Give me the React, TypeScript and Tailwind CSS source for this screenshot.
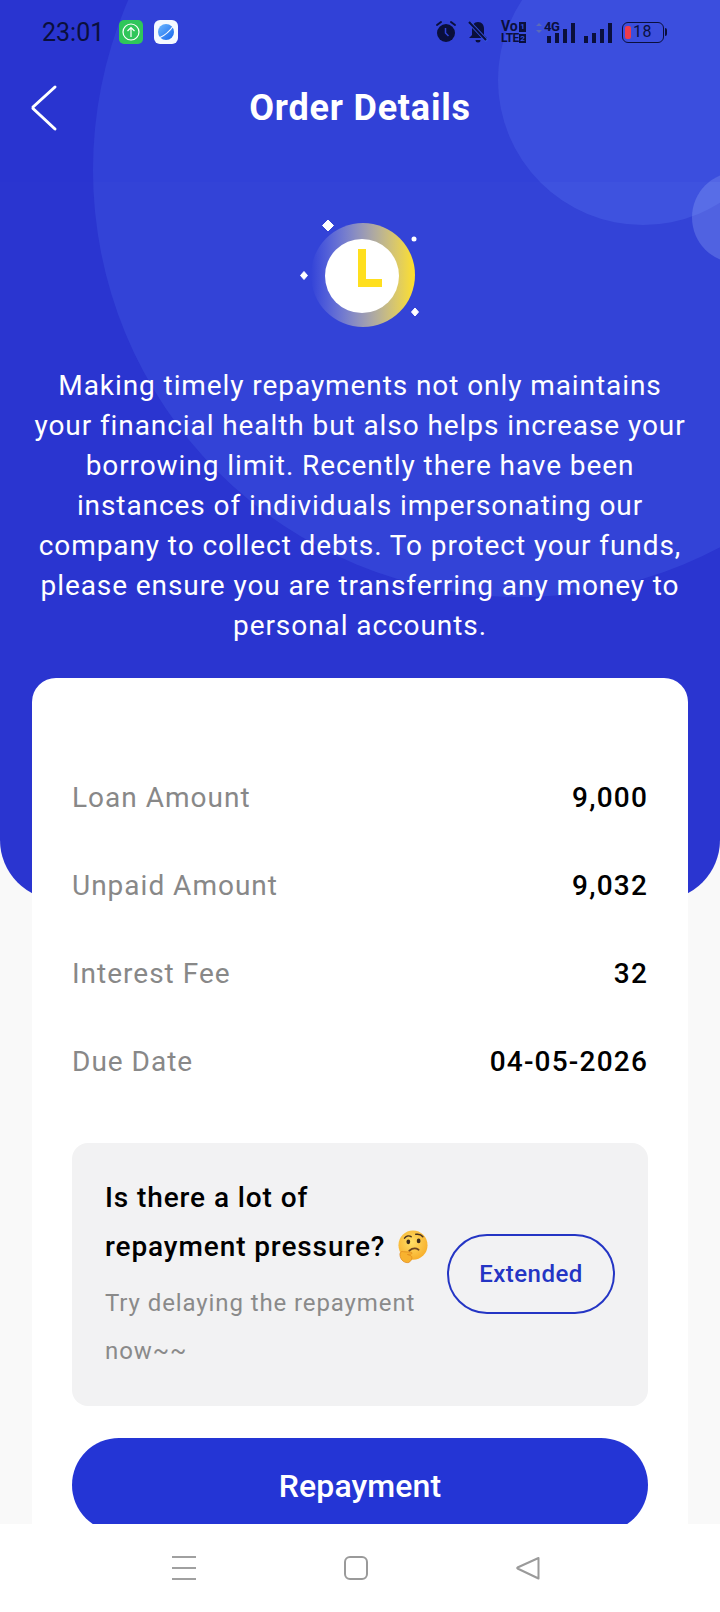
const rows = [
  { label: "Loan Amount", value: "9,000" },
  { label: "Unpaid Amount", value: "9,032" },
  { label: "Interest Fee", value: "32" },
  { label: "Due Date", value: "04-05-2026" },
];

function StatusIcons() {
  return (
    <div className="flex items-center">
      <svg width="22" height="24" viewBox="0 0 22 24">
        <circle cx="11" cy="13" r="9" fill="#0a0f3c" />
        <path d="M2 5l4-3M20 5l-4-3" stroke="#0a0f3c" strokeWidth="2" strokeLinecap="round" />
        <path d="M10.5 8v5l3 3" stroke="#3044d8" strokeWidth="1.5" fill="none" />
      </svg>
      <svg width="22" height="24" viewBox="0 0 22 24" className="ml-[10px]">
        <path d="M11 2c-4 0-6 3-6 7v6l-3 3h18l-3-3V9c0-4-2-7-6-7z" fill="#0a0f3c" />
        <path d="M8.5 20a2.5 2.5 0 0 0 5 0z" fill="#0a0f3c" />
        <path d="M3 3l17 18" stroke="#3350dd" strokeWidth="4" />
        <path d="M2 2l17 18" stroke="#0a0f3c" strokeWidth="2" />
      </svg>
      <div className="ml-[12px] flex w-[25px] flex-col text-[#0a0f3c]">
        <div className="flex items-center justify-between text-[14px] leading-[11px] font-bold">
          <span>Vo</span>
          <span className="h-[10px] w-[7px] bg-[#0a0f3c] text-center text-[8px] leading-[10px] text-[#3350dd]">1</span>
        </div>
        <div className="mt-[1px] flex items-center justify-between text-[12px] leading-[10px] font-bold">
          <span className="tracking-[-0.5px]">LTE</span>
          <span className="h-[9px] w-[7px] bg-[#0a0f3c] text-center text-[8px] leading-[9px] text-[#3350dd]">2</span>
        </div>
      </div>
      <div className="relative ml-[9px] flex h-[21px] w-[40px] items-end justify-end gap-[4px]">
        <span className="absolute top-[-1px] left-[9px] text-[13px] leading-[12px] font-bold tracking-[-0.5px] text-[#0a0f3c]">4G</span>
        <svg width="8" height="12" viewBox="0 0 8 12" className="absolute top-0 left-0">
          <path d="M4 1l3 3H1zM4 11l3-3H1z" fill="#5a6bb8" />
        </svg>
        <span className="h-[7px] w-[4px] bg-[#0a0f3c]" />
        <span className="h-[10px] w-[4px] bg-[#0a0f3c]" />
        <span className="h-[14px] w-[4px] bg-[#0a0f3c]" />
        <span className="h-[20px] w-[4px] bg-[#0a0f3c]" />
      </div>
      <div className="ml-[9px] flex h-[21px] items-end gap-[4px]">
        <span className="h-[7px] w-[4px] bg-[#0a0f3c]" />
        <span className="h-[10px] w-[4px] bg-[#0a0f3c]" />
        <span className="h-[14px] w-[4px] bg-[#0a0f3c]" />
        <span className="h-[20px] w-[4px] bg-[#0a0f3c]" />
      </div>
      <div className="ml-[10px] flex items-center">
        <div className="flex h-[21px] w-[42px] items-center rounded-[6px] border-[1.5px] border-[#0a0f3c] pl-[2px]">
          <span className="h-[13px] w-[6px] rounded-[2px] bg-[#ee3b4b]" />
          <span className="ml-[2px] text-[16px] leading-none tracking-[0.5px] text-[#0a0f3c]">18</span>
        </div>
        <span className="ml-[1px] h-[8px] w-[2px] rounded-r-sm bg-[#0a0f3c]" />
      </div>
    </div>
  );
}

function ClockBadge() {
  return (
    <svg width="140" height="120" viewBox="0 0 140 120">
      <defs>
        <linearGradient id="ring" x1="0" y1="0" x2="1" y2="0">
          <stop offset="0" stopColor="#ffffff" stopOpacity="0" />
          <stop offset="1" stopColor="#ffe02a" />
        </linearGradient>
      </defs>
      <circle cx="73" cy="60" r="52" fill="url(#ring)" />
      <circle cx="72" cy="61" r="37" fill="#fff" />
      <path d="M72 34V68H92" stroke="#ffdf1e" strokeWidth="8" fill="none" />
      <path d="M38 5l5.500 5.500L38 16l-5.500-5.500z" fill="#fff" stroke="#fff" strokeLinejoin="round" />
      <path d="M14 56.500l3.500 4-3.500 4-3.500-4z" fill="#fff" stroke="#fff" strokeLinejoin="round" />
      <circle cx="124" cy="24" r="2.500" fill="#fff" />
      <path d="M125 93l3.500 4-3.500 4-3.500-4z" fill="#fff" stroke="#fff" strokeLinejoin="round" />
    </svg>
  );
}

function ThinkingFace() {
  return (
    <svg width="30" height="34" viewBox="0 0 32 36" className="ml-[13px] inline-block align-[-8px]">
      <defs>
        <radialGradient id="face" cx="0.45" cy="0.4" r="0.65">
          <stop offset="0" stopColor="#ffdf66" />
          <stop offset="1" stopColor="#f7ac28" />
        </radialGradient>
      </defs>
      <circle cx="16" cy="16" r="15.500" fill="url(#face)" />
      <path d="M7 8.500c2-2.500 5-3 7-1.500M19 4.500c3-.5 6 .5 7.500 2.500" stroke="#4a3320" strokeWidth="1.600" fill="none" strokeLinecap="round" />
      <ellipse cx="11" cy="12.500" rx="2" ry="2.600" fill="#3a2a1c" />
      <ellipse cx="22" cy="11.500" rx="2" ry="2.600" fill="#3a2a1c" />
      <path d="M12 22c3-2.500 7-3 10-1" stroke="#6b4320" strokeWidth="1.800" fill="none" strokeLinecap="round" />
      <path d="M2 26c0-3 2-3.500 4-3l8 .5c1.500.5 1 2-.5 2.200l-3.500.3 4 1.500c1.500 1 1 5-2.500 7-4 1-9-2-9.500-8.500z" fill="#f7b22f" stroke="#e08a1e" strokeWidth=".8" />
    </svg>
  );
}

export default function App() {
  return (
    <div className="relative flex h-[1612px] w-[720px] flex-col overflow-hidden bg-[#f9f9f9] font-['Roboto',sans-serif]">
      {/* blue backdrop behind the content */}
      <div className="absolute top-0 left-0 h-[900px] w-[720px] overflow-hidden rounded-b-[60px] bg-[#2a35d0]">
        <div className="absolute top-[-257px] left-[93px] h-[854px] w-[854px] rounded-full bg-[#5a7cf5]/20" />
        <div className="absolute top-[-65px] left-[498px] h-[290px] w-[290px] rounded-full bg-[#6f93ff]/20" />
        <div className="absolute top-[172px] left-[692px] h-[91px] w-[91px] rounded-full bg-[#a9c0ff]/25" />
      </div>

      <div className="relative flex min-h-0 flex-1 flex-col overflow-hidden">
        <header className="shrink-0 bg-[#2435d5]/10 pb-[30px]">
          <div className="flex h-[64px] items-center justify-between pr-[53px] pl-[42px]">
            <div className="flex items-center">
              <span className="text-[25px] leading-none text-[#0a0f3c]">23:01</span>
              <svg width="24" height="24" viewBox="0 0 24 24" className="ml-[15px]">
                <rect width="24" height="24" rx="5" fill="#2fc65a" />
                <circle cx="12" cy="12" r="8" fill="none" stroke="#fff" strokeWidth="1.200" />
                <path d="M12 17V8M8.500 11L12 7.500l3.500 3.500" fill="none" stroke="#fff" strokeWidth="1.200" />
              </svg>
              <svg width="24" height="24" viewBox="0 0 24 24" className="ml-[11px]">
                <defs>
                  <linearGradient id="planet" x1="0" y1="0" x2="1" y2="1">
                    <stop offset="0" stopColor="#6db8ff" />
                    <stop offset="1" stopColor="#1464ec" />
                  </linearGradient>
                </defs>
                <rect width="24" height="24" rx="6" fill="#f5f9ff" />
                <circle cx="12" cy="12" r="8" fill="url(#planet)" />
                <path d="M5 18C10 16 16 11 20 5" stroke="#f5f9ff" strokeWidth="1.200" fill="none" />
              </svg>
            </div>
            <StatusIcons />
          </div>
          <div className="relative flex h-[88px] items-center justify-center">
            <svg width="28" height="48" viewBox="0 0 28 48" className="absolute top-[20px] left-[30px]">
              <path d="M25 3L3 23M3 24.500L25 45" stroke="#fff" strokeWidth="3" fill="none" strokeLinecap="round" />
            </svg>
            <h1 className="text-[36px] font-bold tracking-[0.8px] text-white">Order Details</h1>
          </div>
        </header>

        <div className="flex h-[184px] shrink-0 items-start justify-center pt-[33px]">
          <ClockBadge />
        </div>

        <p className="shrink-0 px-8 text-center text-[28px] leading-[40px] tracking-[0.92px] text-white">
          Making timely repayments not only maintains your financial health but also helps increase your borrowing limit. Recently there have been instances of individuals impersonating our company to collect debts. To protect your funds, please ensure you are transferring any money to personal accounts.
        </p>

        <section className="mx-8 mt-8 shrink-0 rounded-t-[24px] bg-white px-10 pt-[76px] pb-10">
          {rows.map((r) => (
            <div key={r.label} className="flex h-[88px] items-center justify-between">
              <span className="text-[28px] tracking-[1px] text-[#888888]">{r.label}</span>
              <span className="text-[28px] font-medium tracking-[1.2px] text-black">{r.value}</span>
            </div>
          ))}

          <div className="mt-[37px] flex items-center justify-between rounded-[16px] bg-[#f2f2f3] pt-[30px] pr-[33px] pb-[31px] pl-[33px]">
            <div className="w-[340px]">
              <p className="text-[28px] leading-[49px] font-medium tracking-[0.9px] whitespace-nowrap text-black">
                Is there a lot of
                <br />
                repayment pressure?
                <ThinkingFace />
              </p>
              <p className="mt-2 text-[24px] leading-[48px] tracking-[0.9px] text-[#8a8a8a]">Try delaying the repayment now~~</p>
            </div>
            <button className="flex h-[80px] w-[168px] items-center justify-center rounded-full border-2 border-[#2435c4] text-[24px] font-medium tracking-[0.5px] text-[#2435c4]">
              Extended
            </button>
          </div>

          <button className="mt-8 h-[94px] w-full rounded-full bg-[#2435d5] pt-[2px] text-[32px] font-medium tracking-[0.1px] text-white">Repayment</button>
        </section>
      </div>

      <nav className="relative flex h-[88px] shrink-0 items-start justify-center bg-white pt-[32px] pr-2">
        <svg width="24" height="24" viewBox="0 0 24 24">
          <path d="M0 1h24M0 12h24M0 23h24" stroke="#a0a0a0" strokeWidth="2" />
        </svg>
        <svg width="24" height="24" viewBox="0 0 24 24" className="ml-[148px]">
          <rect x="1" y="1" width="22" height="22" rx="5" fill="none" stroke="#9a9a9a" strokeWidth="2" />
        </svg>
        <svg width="24" height="24" viewBox="0 0 24 24" className="ml-[148px]">
          <path d="M22.500 2L1.500 11.500a.6.6 0 0 0 0 1L22.500 22.500z" fill="none" stroke="#9a9a9a" strokeWidth="2" strokeLinejoin="round" />
        </svg>
      </nav>
    </div>
  );
}
